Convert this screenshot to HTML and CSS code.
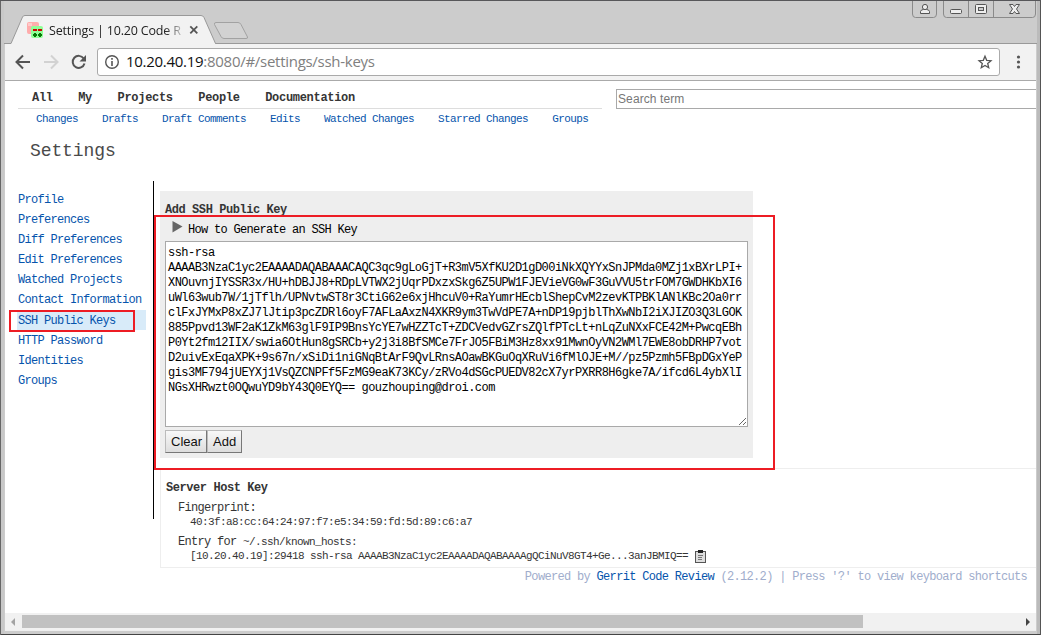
FILE: index.html
```
<!DOCTYPE html>
<html lang="en">
<head>
<meta charset="utf-8">
<title>Settings | 10.20 Code Review</title>
<link rel="stylesheet" href="styles.css">
</head>
<body>
<div class="window">
  <header class="titlebar">
    <svg class="tab-shape" width="260" height="32" viewBox="0 0 260 32">
      <path d="M5 29V28.5H11L22.500 2Q23.200 .5 25 .5H201Q203 .5 204 2.500L215.500 28.500V29Z" fill="#f2f2f2"/>
      <path d="M4 28.500H11L22.500 2Q23.200 .5 25 .5H201Q203 .5 204 2.500L215.500 28.500H260" fill="none" stroke="#999"/>
      <path d="M214.500 9.500Q214 7.500 216 7.500H238Q240 7.500 241 9.500L247.500 22Q248 23.500 246 23.500H224Q222 23.500 221 21.500Z" fill="#d2d2d2" stroke="#a2a2a2"/>
    </svg>
    <div class="tab">
      <svg class="favicon" width="17" height="17" viewBox="0 0 17 17">
        <rect x="0" y="0" width="12" height="12" rx="2" fill="#ffacac"/><rect x="1" y="1" width="4" height="3" fill="#ffcaca"/>
        <rect x="4" y="4" width="12" height="12" rx="2" fill="#90ff98"/>
        <path d="M6 7h4v2H6zM11 7h4v2h-4z" fill="#c00"/>
        <path d="M7 11h2v1h1v2H9v1H7v-1H6v-2h1zM12 11h2v1h1v2h-1v1h-2v-1h-1v-2h1z" fill="#087808"/>
      </svg>
      <span class="tab-title">Settings | 10.20 Code R</span>
      <svg width="10" height="10" viewBox="0 0 10 10"><path d="M1.300 1.300l7 7M8.300 1.300l-7 7" stroke="#555" stroke-width="1.800"/></svg>
    </div>
    <div class="controls">
      <svg width="125" height="20" viewBox="0 0 125 20">
        <g fill="none" stroke="#8a8a8a">
          <path d="M.5 0V13Q.5 16.500 3.500 16.500H21.500Q24.500 16.500 24.500 13V0"/>
          <path d="M31.500 0V13Q31.500 16.500 34.500 16.500H120.500Q123.500 16.500 123.500 13V0M56.500 0V16M81.500 0V16"/>
        </g>
        <g fill="#eee" stroke="#555">
          <path d="M8.500 12.500V10.500Q9 8.500 11.500 8.500H14.500Q17 8.500 17.500 10.500V12.500Z"/>
          <circle cx="13" cy="6" r="2.600"/>
          <rect x="38.500" y="8.500" width="11" height="4" rx="1"/>
          <rect x="63.500" y="3.500" width="11" height="9" rx="1"/>
          <rect x="66.500" y="6.500" width="5" height="3" fill="#ccc"/>
          <path d="M97.500 3.500H101L102.500 5.500L104 3.500H107.500L104.500 8L107.500 12.500H104L102.500 10.500L101 12.500H97.500L100.500 8Z"/>
        </g>
      </svg>
    </div>
  </header>

  <div class="toolbar">
    <svg class="nav-icons" width="86" height="36" viewBox="0 0 86 36">
      <g fill="none" stroke-width="2">
        <path d="M25 18H12M18 11.500L11.500 18L18 24.500" stroke="#555"/>
        <path d="M39 18H52M46 11.500L52.500 18L46 24.500" stroke="#d2d2d2"/>
        <path d="M78.700 14.500A6 6 0 1 0 79.500 19.500" stroke="#555"/>
      </g>
      <path d="M81 11V17.500H74.500Z" fill="#555"/>
    </svg>
    <div class="address">
      <svg width="16" height="16" viewBox="0 0 16 16"><circle cx="8" cy="8" r="6.300" fill="none" stroke="#555" stroke-width="1.400"/><path d="M7.200 7h1.600v5H7.200zM7.200 4h1.600v1.700H7.200z" fill="#555"/></svg>
      <span class="url"><b>10.20.40.19</b>:8080/#/settings/ssh-keys</span>
      <svg class="star" width="16" height="16" viewBox="0 0 16 16"><path d="M8 2.200L9.700 6.300L14 6.700L10.700 9.500L11.700 13.700L8 11.400L4.300 13.700L5.300 9.500L2 6.700L6.300 6.300Z" fill="none" stroke="#555" stroke-width="1.300"/></svg>
    </div>
    <svg class="more" width="5" height="16" viewBox="0 0 5 16"><g fill="#555"><circle cx="2.500" cy="3" r="1.600"/><circle cx="2.500" cy="8" r="1.600"/><circle cx="2.500" cy="13" r="1.600"/></g></svg>
  </div>

  <div class="page">
    <div class="top">
      <div class="menus">
        <nav class="main-menu"><a>All</a><a>My</a><a>Projects</a><a>People</a><a>Documentation</a></nav>
        <nav class="sub-menu"><a>Changes</a><a>Drafts</a><a>Draft Comments</a><a>Edits</a><a>Watched Changes</a><a>Starred Changes</a><a>Groups</a></nav>
      </div>
      <input class="search" type="text" placeholder="Search term">
    </div>
    <h1>Settings</h1>
    <div class="columns">
      <nav class="side">
        <a>Profile</a><a>Preferences</a><a>Diff Preferences</a><a>Edit Preferences</a><a>Watched Projects</a><a>Contact Information</a><a class="selected">SSH Public Keys</a><a>HTTP Password</a><a>Identities</a><a>Groups</a>
      </nav>
      <main class="content">
        <section class="add-key">
          <h2>Add SSH Public Key</h2>
          <div class="howto"><svg width="11" height="12" viewBox="0 0 11 12"><path d="M.5 0L10.500 5.500L.5 11.500Z" fill="#666"/></svg><span>How to Generate an SSH Key</span></div>
          <textarea class="key" spellcheck="false">ssh-rsa
AAAAB3NzaC1yc2EAAAADAQABAAACAQC3qc9gLoGjT+R3mV5XfKU2D1gD00iNkXQYYxSnJPMda0MZj1xBXrLPI+
XNOuvnjIYSSR3x/HU+hDBJJ8+RDpLVTWX2jUqrPDxzxSkg6Z5UPW1FJEVieVG0wF3GuVVU5trFOM7GWDHKbXI6
uWl63wub7W/1jTflh/UPNvtwST8r3CtiG62e6xjHhcuV0+RaYumrHEcblShepCvM2zevKTPBKlANlKBc2Oa0rr
clFxJYMxP8xZJ7lJtip3pcZDRl6oyF7AFLaAxzN4XKR9ym3TwVdPE7A+nDP19pjblThXwNbI2iXJIZO3Q3LGOK
885Ppvd13WF2aK1ZkM63glF9IP9BnsYcYE7wHZZTcT+ZDCVedvGZrsZQlfPTcLt+nLqZuNXxFCE42M+PwcqEBh
P0Yt2fm12IIX/swia6OtHun8gSRCb+y2j3i8BfSMCe7FrJO5FBiM3Hz8xx91MwnOyVN2WMl7EWE8obDRHP7vot
D2uivExEqaXPK+9s67n/xSiDi1niGNqBtArF9QvLRnsAOawBKGuOqXRuVi6fMlOJE+M//pz5Pzmh5FBpDGxYeP
gis3MF794jUEYXj1VsQZCNPFf5FzMG9eaK73KCy/zRVo4dSGcPUEDV82cX7yrPXRR8H6gke7A/ifcd6L4ybXlI
NGsXHRwzt0OQwuYD9bY43Q0EYQ== gouzhouping@droi.com</textarea>
          <div class="buttons"><button>Clear</button><button>Add</button></div>
        </section>
        <section class="host-key">
          <h2>Server Host Key</h2>
          <div class="label">Fingerprint:</div>
          <div class="value">40:3f:a8:cc:64:24:97:f7:e5:34:59:fd:5d:89:c6:a7</div>
          <div class="label">Entry for <code>~/.ssh/known_hosts:</code></div>
          <div class="value">[10.20.40.19]:29418 ssh-rsa AAAAB3NzaC1yc2EAAAADAQABAAAAgQCiNuV8GT4+Ge...3anJBMIQ==<svg width="11" height="13" viewBox="0 0 11 13"><rect x=".5" y="1.500" width="10" height="11" fill="#ddd" stroke="#555"/><path d="M3 0h5v3H3z" fill="#222"/><path d="M3 5.500h5M3 7.500h4M3 9.500h4" stroke="#777"/></svg></div>
        </section>
      </main>
    </div>
    <footer>Powered by <a>Gerrit Code Review</a> (2.12.2) | Press '?' to view keyboard shortcuts</footer>
  </div>
  <div class="scrollbar">
    <svg width="17" height="18" viewBox="0 0 17 18"><path d="M10 5V13L6 9Z" fill="#a3a3a3"/></svg>
    <div class="track"><div class="thumb"></div></div>
    <svg width="17" height="18" viewBox="0 0 17 18"><path d="M7 5V13L11 9Z" fill="#444"/></svg>
  </div>
  <div class="mark mark-menu"></div>
  <div class="mark mark-form"></div>
</div>
</body>
</html>
```
FILE: styles.css
```
* { box-sizing: border-box; }
body { margin: 0; width: 1041px; height: 635px; overflow: hidden; background: #444; }
svg { display: block; flex: none; }

.window {
  position: relative;
  width: 1041px;
  height: 635px;
  padding: 0 5px 4px;
  display: flex;
  flex-direction: column;
  background: #ccc;
  border-top: 1px solid #57575a;
  box-shadow: inset 1px 0 #666, inset -1px 0 #555, inset 0 -1px #444, inset 4px 0 #c8c8c8, inset -4px 0 #bbb;
}

.titlebar { height: 43px; flex: none; position: relative; display: flex; justify-content: space-between; border-bottom: 1px solid #999; margin: 0 -1px; }
.tab-shape { position: absolute; left: -4px; top: 14px; }
.tab { position: relative; display: flex; align-items: center; height: 30px; margin: 14px 0 0 23px; font: 12.5px "Open Sans", "Noto Sans", sans-serif; color: #222; }
.favicon { margin-right: 5px; }
.tab-title { width: 135px; margin-right: 5px; white-space: nowrap; letter-spacing: -.18px; -webkit-mask-image: linear-gradient(90deg, #000 86%, transparent 102%); mask-image: linear-gradient(90deg, #000 86%, transparent 102%); }

.toolbar { height: 37px; flex: none; display: flex; align-items: center; background: #f2f2f2; border-bottom: 1px solid #aaa; }
.nav-icons { margin-right: 6px; }
.address { width: 903px; height: 28px; display: flex; align-items: center; padding: 0 6px; border: 1px solid #aaa; border-radius: 3px; background: #fff; }
.url { margin-left: 6px; padding-bottom: 2px; font: 15px/24px "Open Sans", "Noto Sans", sans-serif; letter-spacing: -.28px; color: #808080; white-space: nowrap; }
.url b { font-weight: 400; color: #111; }
.star { margin-left: auto; }
.more { margin-left: 16px; }

.page { flex: 1; min-height: 0; overflow: hidden; background: #fff; font: 12px/20px "Liberation Mono", monospace; letter-spacing: -.7px; color: #353535; }
.top { display: flex; align-items: flex-start; height: 46px; padding-left: 13px; }
.menus { width: 584px; flex: none; }
.main-menu { height: 28px; display: flex; gap: 25.500px; padding: 7px 0 0 14px; border-bottom: 1px solid #ddd; font-weight: 700; letter-spacing: -.3px; }
.sub-menu { display: flex; gap: 24px; padding-left: 18px; font-size: 11px; letter-spacing: -.6px; color: #0654ac; white-space: nowrap; }
.search { flex: none; width: 500px; height: 20px; margin: 8px 0 0 14px; padding: 0 1px; border: 1px solid #a9a9a9; font: 12px "Liberation Sans", sans-serif; letter-spacing: .1px; }
.search::placeholder { color: #777; opacity: 1; }
h1 { margin: 10px 0 0 25px; font-size: 18px; line-height: 28px; font-weight: 400; letter-spacing: -.1px; color: #4a4a4a; }

.columns { display: flex; margin-top: 16px; }
.side { width: 149px; height: 338px; flex: none; padding: 8px 7px 0 12px; border-right: 1px solid #000; }
.side a { display: block; height: 20px; padding-left: 1px; line-height: 22px; color: #0654ac; white-space: nowrap; }
.side .selected { margin-top: 1px; background: #d8ebf9; }
.content { width: 1000px; flex: none; padding: 10px 0 0 6px; }
h2 { margin: 0; font-size: 12px; line-height: 20px; letter-spacing: -.43px; }

.add-key { width: 593px; height: 267px; padding: 9px 5px 0; background: #eee; }
.howto { height: 20px; display: flex; padding-left: 7px; color: #000; }
.howto svg { margin: 1px 5px 0 0; }
.key { display: block; width: 583px; height: 186px; margin: 1px 0 3px; padding: 4px 2px 0; border: 1px solid #a9a9a9; background: #fff; color: #000; font: 12px/15px "Liberation Mono", monospace; letter-spacing: -.53px; white-space: pre; overflow: hidden; resize: both; }
.buttons { display: flex; }
button { height: 23px; padding: 0 5px; border: 1px solid; border-color: #bbb #777 #777 #bbb; background: linear-gradient(#f8f8f8, #ddd); font: 13px "Liberation Sans", sans-serif; color: #111; }
button:first-child { width: 42px; }
button:last-child { width: 35px; }

.host-key { height: 100px; margin-top: 10px; padding: 9px 5px 0; border: 1px solid #eee; white-space: nowrap; }
.label { height: 20px; padding-left: 12px; }
.label code { font: 11px "Liberation Mono", monospace; letter-spacing: -.6px; }
.value { display: flex; align-items: center; height: 14px; margin-top: -3px; margin-bottom: 3px; padding-left: 24px; line-height: 14px; font-size: 11px; letter-spacing: -.6px; }
.value svg { margin-left: 7px; }
footer { margin-right: 9px; line-height: 19px; text-align: right; letter-spacing: -.68px; color: #a0adcc; }
footer a { color: #0654ac; }

.scrollbar { height: 18px; flex: none; display: flex; background: #f1f1f1; border-bottom: 1px solid #eee; }
.track { flex: 1; padding: 2px 0; }
.thumb { width: 841px; height: 13px; background: #c1c1c1; }

.mark { position: absolute; border: 2px solid #ed1c24; }
.mark-menu { left: 9px; top: 309px; width: 126px; height: 22px; }
.mark-form { left: 154px; top: 214px; width: 621px; height: 255px; }
```
